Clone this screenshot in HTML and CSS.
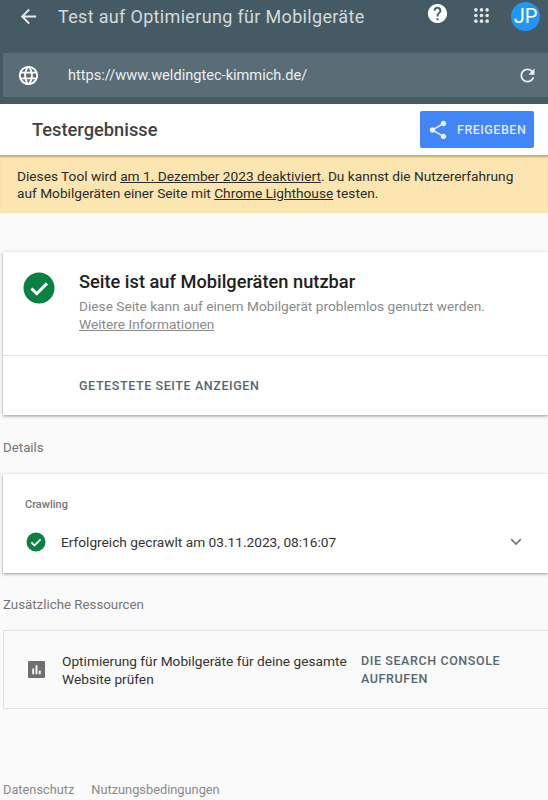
FILE: index.html
```html
<!DOCTYPE html>
<html lang="de">
<head>
  <meta charset="UTF-8">
  <title>Test auf Optimierung für Mobilgeräte</title>
  <link rel="stylesheet" href="styles.css">
</head>
<body>

  <!-- Kopfzeile -->
  <header class="app-header">
    <div class="top-row">
      <svg class="back-icon" viewBox="0 0 24 24"><path d="M20 11H7.83l5.59-5.59L12 4l-8 8 8 8 1.41-1.41L7.83 13H20v-2z"/></svg>
      <h1 class="app-title">Test auf Optimierung für Mobilgeräte</h1>
      <svg class="help-icon" viewBox="0 0 24 24"><path d="M12 2C6.48 2 2 6.48 2 12s4.48 10 10 10 10-4.48 10-10S17.52 2 12 2zm1 17h-2v-2h2v2zm2.07-7.75l-.9.92C13.45 12.9 13 13.5 13 15h-2v-.5c0-1.1.45-2.1 1.17-2.83l1.24-1.26c.37-.36.59-.86.59-1.41 0-1.1-.9-2-2-2s-2 .9-2 2H8c0-2.21 1.79-4 4-4s4 1.79 4 4c0 .88-.36 1.68-.93 2.25z"/></svg>
      <svg class="apps-icon" viewBox="0 0 16 16">
        <circle cx="2" cy="2" r="1.9"/><circle cx="8" cy="2" r="1.9"/><circle cx="14" cy="2" r="1.9"/>
        <circle cx="2" cy="8" r="1.9"/><circle cx="8" cy="8" r="1.9"/><circle cx="14" cy="8" r="1.9"/>
        <circle cx="2" cy="14" r="1.9"/><circle cx="8" cy="14" r="1.9"/><circle cx="14" cy="14" r="1.9"/>
      </svg>
      <div class="avatar">JP</div>
    </div>
    <div class="url-bar">
      <svg class="globe-icon" viewBox="0 0 24 24"><path d="M11.99 2C6.47 2 2 6.48 2 12s4.47 10 9.99 10C17.52 22 22 17.52 22 12S17.52 2 11.99 2zm6.93 6h-2.95c-.32-1.25-.78-2.45-1.38-3.56 1.84.63 3.37 1.91 4.33 3.56zM12 4.04c.83 1.2 1.48 2.53 1.91 3.96h-3.82c.43-1.43 1.08-2.76 1.91-3.96zM4.26 14C4.1 13.36 4 12.69 4 12s.1-1.36.26-2h3.38c-.08.66-.14 1.32-.14 2s.06 1.34.14 2H4.26zm.82 2h2.95c.32 1.25.78 2.45 1.38 3.56-1.84-.63-3.37-1.9-4.33-3.56zm2.95-8H5.08c.96-1.66 2.49-2.93 4.33-3.56C8.81 5.55 8.35 6.75 8.03 8zM12 19.96c-.83-1.2-1.48-2.53-1.91-3.96h3.82c-.43 1.43-1.08 2.76-1.91 3.96zM14.34 14H9.66c-.09-.66-.16-1.32-.16-2s.07-1.35.16-2h4.68c.09.65.16 1.32.16 2s-.07 1.34-.16 2zm.25 5.56c.6-1.11 1.06-2.31 1.38-3.56h2.95c-.96 1.65-2.49 2.93-4.33 3.56zM16.36 14c.08-.66.14-1.32.14-2s-.06-1.34-.14-2h3.38c.16.64.26 1.31.26 2s-.1 1.36-.26 2h-3.38z"/></svg>
      <span class="url-text">https://www.weldingtec-kimmich.de/</span>
      <svg class="reload-icon" viewBox="0 0 24 24"><path d="M17.65 6.35C16.2 4.9 14.21 4 12 4c-4.42 0-7.99 3.58-7.99 8s3.57 8 7.99 8c3.73 0 6.84-2.55 7.73-6h-2.08c-.82 2.33-3.04 4-5.65 4-3.31 0-6-2.69-6-6s2.69-6 6-6c1.66 0 3.14.69 4.22 1.78L13 11h7V4l-2.35 2.35z"/></svg>
    </div>
  </header>

  <!-- Ergebnisleiste -->
  <div class="result-bar">
    <h2 class="result-title">Testergebnisse</h2>
    <button class="share-btn">
      <svg class="share-icon" viewBox="0 0 24 24"><path d="M18 16.08c-.76 0-1.44.3-1.96.77L8.91 12.7c.05-.23.09-.46.09-.7s-.04-.47-.09-.7l7.05-4.11c.54.5 1.25.81 2.04.81 1.66 0 3-1.34 3-3s-1.34-3-3-3-3 1.34-3 3c0 .24.04.47.09.7L8.04 9.81C7.5 9.31 6.79 9 6 9c-1.66 0-3 1.34-3 3s1.34 3 3 3c.79 0 1.5-.31 2.04-.81l7.12 4.16c-.05.21-.08.43-.08.65 0 1.61 1.31 2.92 2.92 2.92s2.92-1.31 2.92-2.92-1.31-2.92-2.92-2.92z"/></svg>
      FREIGEBEN
    </button>
  </div>

  <div class="notice">
    Dieses Tool wird <a href="#">am 1. Dezember 2023 deaktiviert</a>. Du kannst die Nutzererfahrung
    auf Mobilgeräten einer Seite mit <a href="#">Chrome Lighthouse</a> testen.
  </div>

  <main class="content">

    <section class="card summary">
      <div class="summary-main">
        <svg class="check-big" viewBox="0 0 32 32"><circle cx="16" cy="16" r="15.5"/><path class="tick" d="M8.5 16.5l5.2 5.2L24 11.4"/></svg>
        <div>
          <h3 class="summary-title">Seite ist auf Mobilgeräten nutzbar</h3>
          <p class="summary-text">Diese Seite kann auf einem Mobilgerät problemlos genutzt werden.<br><a href="#">Weitere Informationen</a></p>
        </div>
      </div>
      <div class="summary-action">GETESTETE SEITE ANZEIGEN</div>
    </section>

    <h4 class="section-label details-label">Details</h4>

    <section class="card crawl">
      <div class="crawl-label">Crawling</div>
      <div class="crawl-row">
        <svg class="check-small" viewBox="0 0 20 20"><circle cx="10" cy="10" r="9.5"/><path class="tick" d="M5.4 10.3l3.1 3.1 6.1-6.1"/></svg>
        <span class="crawl-text">Erfolgreich gecrawlt am 03.11.2023, 08:16:07</span>
        <svg class="chevron" viewBox="0 0 12 8"><path d="M1.2 1.2L6 6l4.8-4.8"/></svg>
      </div>
    </section>

    <h4 class="section-label extra-label">Zusätzliche Ressourcen</h4>

    <section class="resource">
      <svg class="chart-icon" viewBox="0 0 16 16"><path d="M1 0h14a1 1 0 0 1 1 1v14a1 1 0 0 1-1 1H1a1 1 0 0 1-1-1V1a1 1 0 0 1 1-1zm3 7v5.500h1.800V7H4zm3.100-3v8.500h1.800V4H7.100zm3.100 5v3.500H12V9h-1.800z" fill-rule="evenodd"/></svg>
      <div class="resource-text">Optimierung für Mobilgeräte für deine gesamte Website prüfen</div>
      <div class="resource-link">DIE SEARCH CONSOLE AUFRUFEN</div>
    </section>

  </main>

  <footer class="page-footer">
    <a href="#">Datenschutz</a>
    <a href="#">Nutzungsbedingungen</a>
  </footer>

</body>
</html>
```

FILE: styles.css
```css
* {
  box-sizing: border-box;
}
html, body {
  height: 100%;
}
body {
  margin: 0;
  font-family: Roboto, Arial, sans-serif;
  background: #fafafa;
  color: #212121;
  overflow: hidden;
}
a {
  color: inherit;
}

/* Kopfzeile */
.app-header {
  height: 104px;
  background: #455a64;
}
.top-row {
  display: flex;
  align-items: flex-start;
  height: 53px;
}
.back-icon {
  width: 23px;
  height: 23px;
  margin: 5px 0 0 17px;
  fill: #e6eaec;
}
.app-title {
  margin: 5px 0 0 18px;
  font-size: 18px;
  line-height: 24px;
  font-weight: 400;
  letter-spacing: 0.33px;
  color: #d3dadd;
  white-space: nowrap;
}
.help-icon {
  width: 23px;
  height: 23px;
  margin: 2px 0 0 auto;
  fill: #fff;
}
.apps-icon {
  width: 15px;
  height: 15px;
  margin: 8px 0 0 25px;
  fill: #e3e7e9;
}
.avatar {
  flex: none;
  width: 29px;
  height: 29px;
  margin: 2px 8px 0 22px;
  border-radius: 50%;
  background: #2196f3;
  color: #fff;
  font-size: 20px;
  line-height: 29px;
  text-align: center;
}
.url-bar {
  display: flex;
  align-items: center;
  height: 44px;
  margin-left: 3px;
  background: #5a6c75;
}
.globe-icon {
  width: 23px;
  height: 23px;
  margin-left: 14px;
  fill: #fff;
}
.url-text {
  margin-left: 28px;
  font-size: 14.6px;
  color: #eceff1;
}
.reload-icon {
  width: 21px;
  height: 21px;
  margin-left: auto;
  margin-right: 10px;
  fill: #eceff1;
}

/* Ergebnisleiste */
.result-bar {
  display: flex;
  align-items: center;
  justify-content: space-between;
  height: 51px;
  padding: 0 14px 0 32px;
  background: #fff;
}
.result-title {
  margin: 0;
  font-size: 18.3px;
  font-weight: 500;
  color: #424242;
}
.share-btn {
  display: flex;
  align-items: center;
  width: 114px;
  height: 37px;
  padding: 0 0 0 7px;
  border: none;
  border-radius: 2px;
  background: #4285f4;
  color: #dfe9fb;
  font-family: inherit;
  font-size: 12.5px;
  font-weight: 500;
  letter-spacing: 0.5px;
}
.share-icon {
  width: 22px;
  height: 22px;
  margin-right: 8px;
  fill: #e8f0fe;
}

.notice {
  height: 58px;
  padding: 13px 17px 0;
  background: #fce5b0;
  box-shadow: inset 0 3px 2px -1px rgba(120, 100, 50, 0.45);
  font-size: 13.7px;
  line-height: 17px;
  color: #2b2b2b;
}

/* Karten */
.content {
  padding: 39px 0 0 3px;
}
.card {
  background: #fff;
  box-shadow: 0 1px 3px rgba(0, 0, 0, 0.4);
}
.summary {
  height: 163px;
}
.summary-main {
  display: flex;
  height: 104px;
  padding: 19px 0 0 20px;
  border-bottom: 1px solid #e0e0e0;
}
.check-big {
  flex: none;
  width: 32px;
  height: 32px;
  margin: 1px 24px 0 0;
}
.check-big circle, .check-small circle {
  fill: #0b8043;
}
.tick {
  fill: none;
  stroke: #fff;
  stroke-width: 3;
}
.check-small .tick {
  stroke-width: 1.8;
}
.summary-title {
  margin: 0;
  font-size: 18.25px;
  line-height: 22px;
  font-weight: 500;
  color: #212121;
}
.summary-text {
  margin: 4px 0 0;
  font-size: 13.7px;
  line-height: 18.2px;
  color: #8a8a8a;
}
.summary-action {
  padding: 22px 0 0 76px;
  font-size: 12.5px;
  font-weight: 500;
  letter-spacing: 0.6px;
  color: #56676f;
}
.section-label {
  margin: 0;
  font-size: 13.3px;
  line-height: 16px;
  font-weight: 400;
  color: #757575;
}
.details-label {
  margin: 25px 0 18px;
}
.crawl {
  height: 99px;
  padding: 24px 0 0 22px;
}
.crawl-label {
  font-size: 11px;
  line-height: 14px;
  font-weight: 500;
  color: #757575;
}
.crawl-row {
  display: flex;
  align-items: center;
  margin-top: 20px;
  padding-right: 26px;
}
.check-small {
  width: 20px;
  height: 20px;
  margin: 0 15px 0 1px;
}
.crawl-text {
  font-size: 13.7px;
  color: #333;
}
.chevron {
  width: 12px;
  height: 8px;
  margin-left: auto;
  fill: none;
  stroke: #757575;
  stroke-width: 1.7;
}
.extra-label {
  margin: 24px 0 17px;
}
.resource {
  display: flex;
  align-items: center;
  height: 79px;
  padding: 0 0 0 24px;
  border: 1px solid #e0e0e0;
  border-right: none;
}
.chart-icon {
  flex: none;
  width: 17px;
  height: 17px;
  margin-right: 17px;
  fill: #707070;
}
.resource-text {
  width: 299px;
  flex: none;
  font-size: 13.7px;
  line-height: 18px;
  color: #333;
}
.resource-link {
  width: 150px;
  font-size: 12.5px;
  line-height: 18px;
  font-weight: 500;
  letter-spacing: 0.6px;
  color: #56676f;
}
.page-footer {
  display: flex;
  gap: 17px;
  margin: 73px 0 0 3px;
  font-size: 12.8px;
  line-height: 16px;
  color: #8a8a8a;
}
.page-footer a {
  text-decoration: none;
}
```
